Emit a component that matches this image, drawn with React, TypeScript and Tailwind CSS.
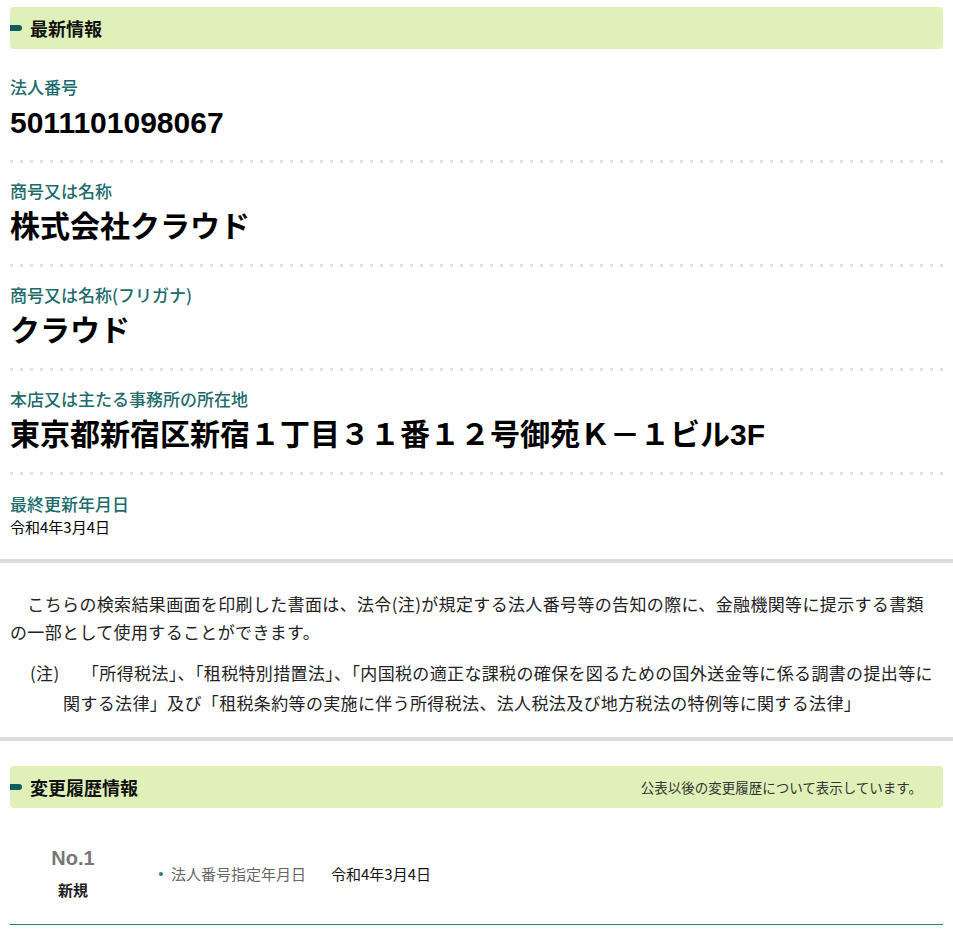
import React from 'react';

const jp = "font-['Noto_Sans_CJK_JP','Noto_Sans_JP',sans-serif]";
const big = "font-['Liberation_Sans','Noto_Sans_CJK_JP',sans-serif]";

interface Field {
    label: string;
    value: string;
    small?: boolean;
}

const fields: Field[] = [
    { label: '法人番号', value: '5011101098067' },
    { label: '商号又は名称', value: '株式会社クラウド' },
    { label: '商号又は名称(フリガナ)', value: 'クラウド' },
    { label: '本店又は主たる事務所の所在地', value: '東京都新宿区新宿１丁目３１番１２号御苑Ｋ－１ビル3F' },
    { label: '最終更新年月日', value: '令和4年3月4日', small: true },
];

const SectionHeader: React.FC<{ title: string; note?: string }> = ({ title, note }) => (
    <div className="flex items-center justify-between h-[42px] bg-[#dff0b8] rounded-[4px]">
        <div className="flex items-center">
            <span className="block w-[12px] h-[6px] bg-[#0f5e5a] rounded-r-full" />
            <h2 className={`ml-[8px] text-[18px] font-bold text-[#111] ${jp}`}>{title}</h2>
        </div>
        {note && <p className={`pr-[21px] text-[13.5px] text-[#333] ${jp}`}>{note}</p>}
    </div>
);

const Dots: React.FC = () => (
    <div className="h-[3px] bg-[linear-gradient(to_right,#e2e2e2_3px,transparent_3px)] bg-[length:10px_3px]" />
);

const App: React.FC = () => {
    return (
        <div className={`w-[953px] bg-white text-black ${jp}`}>
            {/* 最新情報 */}
            <div className="px-[10px] pt-[7px]">
                <SectionHeader title="最新情報" />
                {fields.map((f, i) => (
                    <div key={f.label}>
                        <div className={i === 0 ? 'pt-[28px] pb-[19px]' : f.small ? 'pt-[19px] pb-[22px]' : 'pt-[18px] pb-[19px]'}>
                            <p className="text-[17px] leading-[20px] font-medium text-[#1d6b6b]">{f.label}</p>
                            {f.small ? (
                                <p className="mt-[3px] text-[15px] leading-[20px]">{f.value}</p>
                            ) : (
                                <p className={`mt-[8px] text-[30px] leading-[36px] font-bold whitespace-nowrap ${big}`}>{f.value}</p>
                            )}
                        </div>
                        {i < fields.length - 1 && <Dots />}
                    </div>
                ))}
            </div>

            <div className="h-[4px] bg-[#dcdcdc]" />

            {/* 注記 */}
            <div className="px-[10px] pt-[27px] pb-[19px] text-[17px] tracking-[0.35px] text-[#222]">
                <p className="leading-[28px] whitespace-nowrap">
                    {'\u3000'}こちらの検索結果画面を印刷した書面は、法令(注)が規定する法人番号等の告知の際に、金融機関等に提示する書類
                    <br />
                    の一部として使用することができます。
                </p>
                <p className="mt-[12px] pl-[53px] -indent-[33px] leading-[30px] whitespace-nowrap">
                    <span className="inline-block w-[52px] indent-0">(注)</span>「所得税法」、「租税特別措置法」、「内国税の適正な課税の確保を図るための国外送金等に係る調書の提出等に
                    <br />
                    関する法律」及び「租税条約等の実施に伴う所得税法、法人税法及び地方税法の特例等に関する法律」
                </p>
            </div>

            <div className="h-[4px] bg-[#dcdcdc]" />

            {/* 変更履歴情報 */}
            <div className="px-[10px] pt-[25px]">
                <SectionHeader title="変更履歴情報" note="公表以後の変更履歴について表示しています。" />
                <div className="flex items-center pt-[38px] pb-[24px] border-b border-[#1a8a6e]">
                    <div className="w-[126px] flex flex-col items-center">
                        <span className={`text-[20px] leading-[24px] font-bold text-[#777] ${big}`}>No.1</span>
                        <span className="mt-[10px] text-[15px] leading-[20px] font-bold text-[#222]">新規</span>
                    </div>
                    <div className="flex items-center text-[15px] mt-[2px] ml-[23px]">
                        <span className="w-[4px] h-[4px] rounded-full bg-[#1a8a6e]" />
                        <span className="ml-[8px] text-[#666]">法人番号指定年月日</span>
                        <span className="ml-[25px] text-[#111]">令和4年3月4日</span>
                    </div>
                </div>
            </div>
            <div className="h-[10px]" />
        </div>
    );
};

export default App;
